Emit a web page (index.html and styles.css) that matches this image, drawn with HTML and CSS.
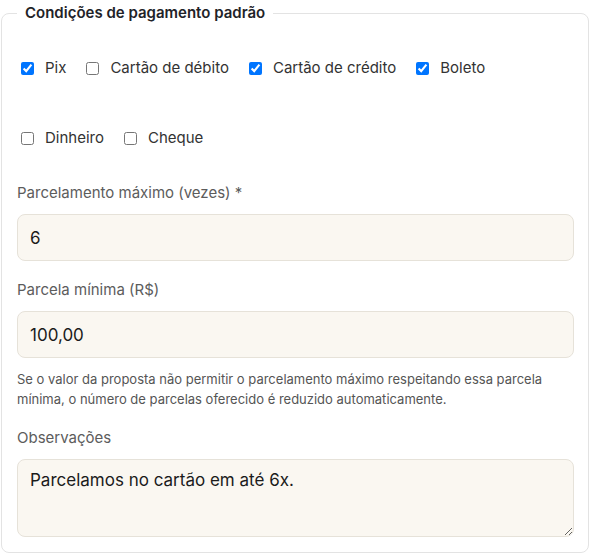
FILE: index.html
```html
<!DOCTYPE html>
<html lang="pt-BR">
  <head>
    <meta charset="UTF-8" />
    <meta name="viewport" content="width=device-width, initial-scale=1.0" />
    <title>Condições de pagamento</title>
    <link rel="stylesheet" href="styles.css">
  </head>
  <body>
    <fieldset class="pay-box">
      <legend class="pay-title">Condições de pagamento padrão</legend>

      <div class="pay-methods">
        <label class="check"><input type="checkbox" checked /> Pix</label>
        <label class="check"><input type="checkbox" /> Cartão de débito</label>
        <label class="check"><input type="checkbox" checked /> Cartão de crédito</label>
        <label class="check"><input type="checkbox" checked /> Boleto</label>
        <label class="check"><input type="checkbox" /> Dinheiro</label>
        <label class="check"><input type="checkbox" /> Cheque</label>
      </div>

      <div class="field">
        <label class="field-label" for="maxParcelas">Parcelamento máximo (vezes) *</label>
        <input class="field-input" id="maxParcelas" type="text" value="6" />
      </div>

      <div class="field">
        <label class="field-label" for="minParcela">Parcela mínima (R$)</label>
        <input class="field-input" id="minParcela" type="text" value="100,00" />
        <p class="hint">
          Se o valor da proposta não permitir o parcelamento máximo respeitando essa parcela
          mínima, o número de parcelas oferecido é reduzido automaticamente.
        </p>
      </div>

      <div class="field">
        <label class="field-label" for="obs">Observações</label>
        <textarea class="field-input field-area" id="obs">Parcelamos no cartão em até 6x.</textarea>
      </div>
    </fieldset>
  </body>
</html>
```

FILE: styles.css
```css
body {
  margin: 0;
  padding: 0 1px;
  background: #fff;
  font-family: "Inter", "Noto Sans", sans-serif;
  color: #222;
}

.pay-box {
  margin: 0;
  padding: 0 14px 15px 15px;
  border: 1px solid #e3e3e3;
  border-radius: 8px;
  width: 588px;
  height: 553px;
  box-sizing: border-box;
}

.pay-title {
  padding: 0 8px;
  font-size: 15px;
  font-weight: 600;
  line-height: 26px;
  color: #1f2328;
}

.pay-methods {
  display: flex;
  flex-wrap: wrap;
  column-gap: 17px;
  row-gap: 48px;
  margin: 31px 0 33px 0;
  padding-left: 1px;
}

.check {
  display: flex;
  align-items: center;
  gap: 11px;
  font-size: 15px;
  line-height: 22px;
  color: #333;
}

.check input {
  margin: 0 0 0 3px;
  width: 13px;
  height: 13px;
}

.field {
  margin-bottom: 18px;
}

.field-label {
  display: block;
  font-size: 15px;
  line-height: 22px;
  color: #5c5c5c;
  margin-bottom: 10px;
}

.field-input {
  display: block;
  width: 100%;
  box-sizing: border-box;
  height: 47px;
  padding: 0 12px;
  font-family: "Inter", "Noto Sans", sans-serif;
  font-size: 17px;
  color: #1b1b1b;
  background: #faf7f1;
  border: 1px solid #e6e2d9;
  border-radius: 8px;
  outline: none;
}

.field-area {
  height: 78px;
  padding: 8px 12px;
  line-height: 24px;
  resize: vertical;
}

.hint {
  margin: 11px 0 0 0;
  font-size: 13px;
  line-height: 20px;
  color: #555;
}
```
